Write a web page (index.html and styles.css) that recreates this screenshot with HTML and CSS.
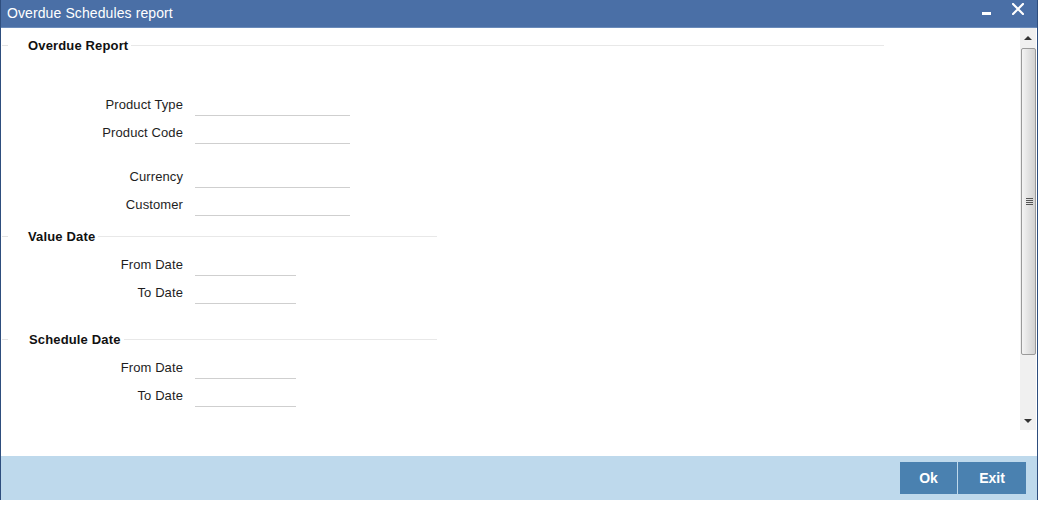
FILE: index.html
```html
<!DOCTYPE html>
<html>
<head>
<meta charset="utf-8">
<link rel="stylesheet" href="styles.css">
</head>
<body>
<div class="window">
  <div class="titlebar">
    <span class="title">Overdue Schedules report</span>
    <div class="controls">
      <span class="minimize"></span>
      <svg class="close" width="12" height="12" viewBox="0 0 12 12"><path d="M1 1L11 11M11 1L1 11" stroke="#fff" stroke-width="2.2" stroke-linecap="square"/></svg>
    </div>
  </div>
  <div class="body">
    <div class="main">
      <div class="legend wide"><span class="stub"></span><span class="legend-text">Overdue Report</span><span class="rule"></span></div>
      <div class="fields first">
        <div class="row"><label class="label">Product Type</label><span class="input long"></span></div>
        <div class="row"><label class="label">Product Code</label><span class="input long"></span></div>
        <div class="row gap"><label class="label">Currency</label><span class="input long"></span></div>
        <div class="row"><label class="label">Customer</label><span class="input long"></span></div>
      </div>
      <div class="legend narrow value"><span class="stub"></span><span class="legend-text">Value Date</span><span class="rule"></span></div>
      <div class="fields dates">
        <div class="row"><label class="label">From Date</label><span class="input short"></span></div>
        <div class="row"><label class="label">To Date</label><span class="input short"></span></div>
      </div>
      <div class="legend narrow schedule"><span class="stub"></span><span class="legend-text">Schedule Date</span><span class="rule"></span></div>
      <div class="fields dates">
        <div class="row"><label class="label">From Date</label><span class="input short"></span></div>
        <div class="row"><label class="label">To Date</label><span class="input short"></span></div>
      </div>
    </div>
    <div class="scrollbar">
      <div class="arrow up"><svg width="8" height="5" viewBox="0 0 8 5"><path d="M0 5L4 1L8 5Z" fill="#333"/></svg></div>
      <div class="track">
        <div class="thumb"><span class="grip"></span></div>
      </div>
      <div class="arrow down"><svg width="8" height="5" viewBox="0 0 8 5"><path d="M0 0L4 4L8 0Z" fill="#333"/></svg></div>
    </div>
  </div>
  <div class="footer">
    <button class="btn ok">Ok</button>
    <button class="btn exit">Exit</button>
  </div>
</div>
</body>
</html>
```

FILE: styles.css
```css
* { box-sizing: border-box; }
html, body { margin: 0; padding: 0; background: #fff; }
body { font-family: "Liberation Sans", Arial, sans-serif; }

.window {
  width: 1038px;
  height: 500px;
  border-left: 1px solid #2e4e7e;
  border-right: 1px solid #2e4e7e;
  display: flex;
  flex-direction: column;
  overflow: hidden;
}

.titlebar {
  height: 28px;
  background: #4a6fa6;
  border-bottom: 1px solid #6a8bba;
  display: flex;
  align-items: flex-start;
  justify-content: space-between;
  padding: 0 13px 0 6px;
  flex: none;
}
.title {
  color: #fff;
  font-size: 14px;
  line-height: 16px;
  padding-top: 5px;
  letter-spacing: 0.1px;
}
.controls {
  display: flex;
  align-items: flex-start;
  gap: 21px;
  padding-top: 3px;
}
.minimize {
  display: block;
  width: 9px;
  height: 3px;
  background: #fff;
  margin-top: 9px;
}
.close { display: block; }

.body {
  flex: none;
  height: 402px;
  display: flex;
}
.main {
  flex: 1;
  padding-top: 8px;
}

.legend {
  display: flex;
  align-items: center;
  height: 18px;
}
.legend.wide { width: 883px; }
.legend.narrow { width: 436px; }
.stub {
  width: 6px;
  height: 1px;
  background: #e4e4e4;
  margin-left: 1px;
  margin-right: 20px;
}
.legend-text {
  font-size: 13px;
  font-weight: bold;
  color: #111;
  padding-right: 3px;
  white-space: nowrap;
  letter-spacing: 0.15px;
}
.schedule .legend-text { margin-left: 1px; }
.rule {
  flex: 1;
  height: 1px;
  background: #e8e8e8;
}

.fields { display: flex; flex-direction: column; }
.fields.first { margin-top: 36px; }
.fields.dates { margin-top: 5px; }
.legend.value { margin-top: 9px; }
.legend.schedule { margin-top: 24px; }

.row {
  display: flex;
  align-items: flex-start;
  height: 28px;
}
.row.gap { margin-top: 16px; }
.label {
  width: 182px;
  text-align: right;
  font-size: 13px;
  line-height: 28px;
  padding-top: 1px;
  color: #1e1e1e;
  margin-right: 12px;
  letter-spacing: 0.1px;
}
.input {
  display: block;
  margin-top: 6px;
  height: 20px;
  border-bottom: 1px solid #cfcfcf;
}
.input.long { width: 155px; }
.input.short { width: 101px; }

.scrollbar {
  width: 16px;
  margin-right: 1px;
  background: #f0f0f0;
  display: flex;
  flex-direction: column;
}
.arrow {
  height: 19px;
  display: flex;
  align-items: center;
  justify-content: center;
}
.arrow.down { height: 17px; }
.track {
  flex: 1;
  padding: 1px 0 0 1px;
}
.thumb {
  height: 307px;
  border: 1px solid #9a9a9a;
  border-radius: 2px;
  background: linear-gradient(to right, #f4f4f4, #e2e2e2 50%, #d2d2d2);
  display: flex;
  align-items: center;
  justify-content: center;
}
.grip {
  display: block;
  width: 7px;
  height: 7px;
  background: repeating-linear-gradient(to bottom, #555 0, #555 1px, transparent 1px, transparent 2px);
  margin-left: 1px;
}

.footer {
  flex: none;
  height: 44px;
  margin-top: 26px;
  background: #bed9ec;
  display: flex;
  justify-content: flex-end;
  align-items: center;
  gap: 1px;
  padding-right: 10px;
}
.btn {
  height: 32px;
  border: none;
  background: #4a81b0;
  color: #fff;
  font-family: "Liberation Sans", Arial, sans-serif;
  font-size: 14px;
  font-weight: bold;
  padding: 0;
}
.btn.ok { width: 57px; }
.btn.exit { width: 68px; margin-right: 1px; }
```
